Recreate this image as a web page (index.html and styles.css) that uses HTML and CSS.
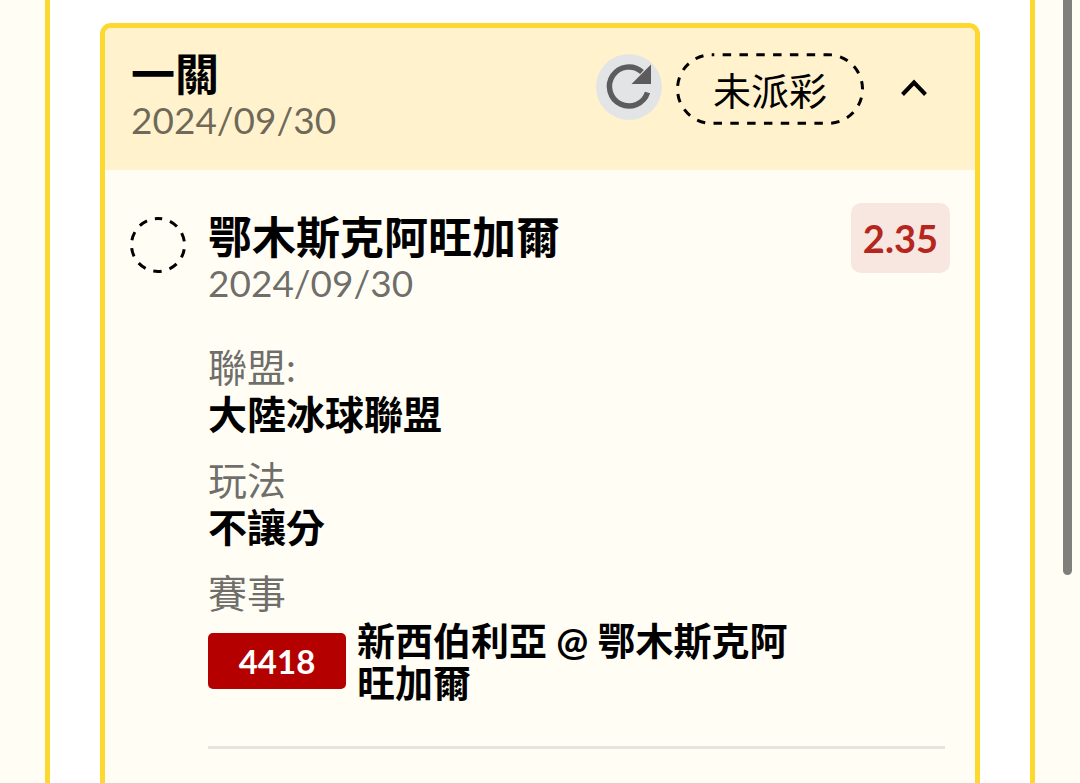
FILE: index.html
```html
<!DOCTYPE html>
<html lang="zh-Hant">
<head>
<meta charset="utf-8">
<meta name="viewport" content="width=device-width, initial-scale=1">
<title>一關</title>
<link rel="stylesheet" href="styles.css">
</head>
<body>
<main class="panel">
  <article class="card">
    <header class="card-header">
      <div class="heading">
        <h1 class="title">一關</h1>
        <time class="date" datetime="2024-09-30">2024/09/30</time>
      </div>
      <div class="actions">
        <button class="refresh" type="button" aria-label="重新整理">
          <svg viewBox="0 0 66 66" width="66" height="66" aria-hidden="true">
            <path d="M46 18A19.500 19.500 0 1 0 51.500 38.500" fill="none" stroke="#5c5c5c" stroke-width="5.5"/>
            <path d="M55 10.500V30H35.500Z" fill="#5c5c5c"/>
          </svg>
        </button>
        <span class="status">
          <svg class="status-outline" viewBox="0 0 189 72" aria-hidden="true">
            <rect x="1.500" y="1.500" width="186" height="69" rx="34.500"/>
          </svg>
          未派彩
        </span>
        <button class="toggle" type="button" aria-label="收合" aria-expanded="true">
          <svg viewBox="0 0 28 20" width="28" height="20" aria-hidden="true">
            <path d="M2.500 16.500L14 4.500L25.500 16.500" fill="none" stroke="#000" stroke-width="4"/>
          </svg>
        </button>
      </div>
    </header>

    <section class="bet">
      <svg class="bet-state" viewBox="0 0 56 56" width="56" height="56" aria-hidden="true">
        <circle cx="28" cy="28" r="26.500" transform="rotate(-90 28 28)"/>
      </svg>
      <div class="bet-main">
        <div class="bet-top">
          <div class="bet-heading">
            <h2 class="title">鄂木斯克阿旺加爾</h2>
            <time class="date" datetime="2024-09-30">2024/09/30</time>
          </div>
          <span class="odds">2.35</span>
        </div>
        <dl class="details">
          <div>
            <dt>聯盟:</dt>
            <dd>大陸冰球聯盟</dd>
          </div>
          <div>
            <dt>玩法</dt>
            <dd>不讓分</dd>
          </div>
          <div>
            <dt>賽事</dt>
            <dd class="match">
              <span class="match-id">4418</span>
              <span class="match-name">新西伯利亞 @ 鄂木斯克阿旺加爾</span>
            </dd>
          </div>
        </dl>
        <hr class="rule">
      </div>
    </section>
  </article>
</main>
<div class="scroll-thumb"></div>
</body>
</html>
```
FILE: styles.css
```css
* {
  box-sizing: border-box;
}

body {
  margin: 0;
  background: #fffdf4;
  color: #000;
  font-family: Lato, "Noto Sans CJK TC", sans-serif;
  font-size: 38px;
  line-height: 46px;
}

h1, h2, dl, dd {
  margin: 0;
}

button {
  padding: 0;
  border: 0;
  background: none;
  cursor: pointer;
}

.panel {
  display: flex;
  min-height: 100vh;
  margin: 0 45px;
  padding: 23px 50px 0;
  border: solid #fdd82e;
  border-width: 0 5px;
  background: #fff;
}

.card {
  flex: 1;
  min-width: 0;
  border: 5px solid #fdd82e;
  border-bottom: 0;
  border-radius: 11px 11px 0 0;
  background: #fffdf4;
}

.card-header {
  display: flex;
  justify-content: space-between;
  padding: 23px 25px 27px 26px;
  border-radius: 6px 6px 0 0;
  background: #fff2cd;
}

.title {
  font-size: 44px;
  font-weight: 700;
}

.date {
  display: block;
  color: rgba(0, 0, 0, 0.58);
  font-size: 37px;
}

.actions {
  display: flex;
  align-items: flex-start;
  gap: 14px;
  padding-top: 2px;
}

.refresh {
  display: flex;
  margin-top: 1px;
  border-radius: 50%;
  background: #e3e4e6;
}

.status {
  position: relative;
  padding: 14px 37px 12px;
}

.status-outline {
  position: absolute;
  inset: 0;
  width: 100%;
  height: 100%;
}

.status-outline rect,
.bet-state circle {
  fill: none;
  stroke: #000;
  stroke-width: 3;
}

.status-outline rect {
  stroke-dasharray: 8.500 8.400;
  stroke-dashoffset: 6;
}

.toggle {
  display: flex;
  align-items: center;
  justify-content: center;
  width: 72px;
  height: 70px;
}

.bet {
  display: flex;
  gap: 22px;
  padding: 33px 25px 40px;
}

.bet-state {
  flex: none;
  margin-top: 14px;
}

.bet-state circle {
  stroke-dasharray: 8.600 8.050;
  stroke-dashoffset: 4.300;
}

.bet-main {
  flex: 1;
  min-width: 0;
}

.bet-top {
  display: flex;
  align-items: flex-start;
  justify-content: space-between;
}

.bet-heading {
  padding-top: 11px;
}

.odds {
  padding: 12px;
  border-radius: 10px;
  background: #f8e7e0;
  color: #b5261e;
  font-weight: 700;
}

.details {
  display: grid;
  gap: 19px;
  margin-top: 37px;
  font-size: 39px;
}

.details dt {
  color: rgba(0, 0, 0, 0.58);
  line-height: 48px;
}

.details dd {
  font-weight: 700;
}

.details .match {
  display: flex;
  align-items: center;
  gap: 11px;
  margin: 2px 140px 0 0;
  font-size: 38px;
  line-height: 42px;
}

.match-id {
  flex: none;
  width: 138px;
  padding: 7px 0;
  border-radius: 5px;
  background: #b50000;
  color: #fff;
  font-size: 33px;
  text-align: center;
}

.rule {
  height: 3px;
  margin: 43px 5px 0 0;
  border: 0;
  background: #e7e3dd;
}

.scroll-thumb {
  position: absolute;
  top: -10px;
  right: 8px;
  width: 9px;
  height: 585px;
  border-radius: 5px;
  background: #807f7b;
}
```
